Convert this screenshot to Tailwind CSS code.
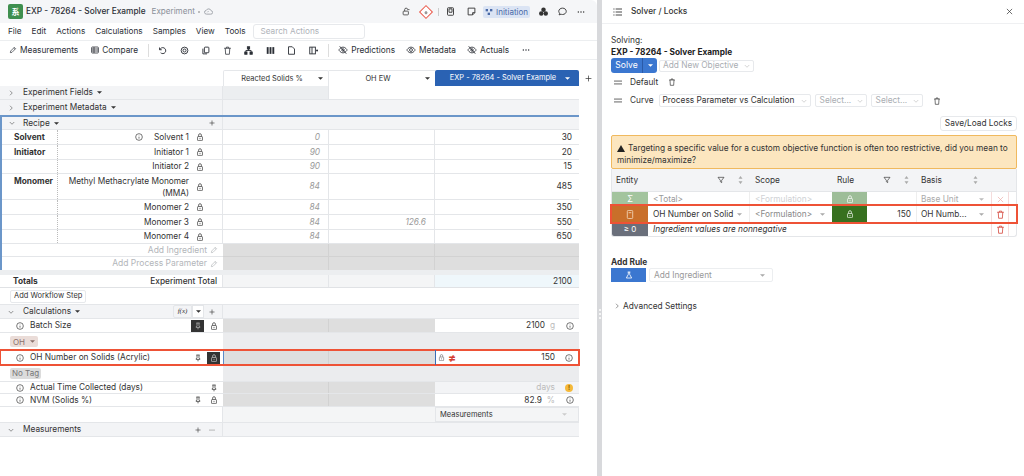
<!doctype html>
<html><head><meta charset="utf-8"><script src="https://cdn.jsdelivr.net/npm/@tailwindcss/browser@4"></script></head>
<body class="m-0 bg-white overflow-hidden">
<svg class="hidden">
<symbol id="lock" viewBox="3 0 18 23" fill="none" stroke="currentColor" stroke-width="2"><rect x="5" y="10" width="14" height="12" rx="2"/><path d="M8 10V6a4 4 0 0 1 8 0v4"/><path d="M12 14v4"/></symbol>
<symbol id="unlock" viewBox="0 0 24 24" fill="none" stroke="currentColor" stroke-width="2"><rect x="3" y="11" width="14" height="10" rx="2"/><path d="M7 11V7a4 4 0 0 1 8 0h5"/></symbol>
<symbol id="pin" viewBox="0 0 24 24" fill="none" stroke="currentColor" stroke-width="2.2"><path d="M7 3h10M9 3v8l-3 4v1h12v-1l-3-4V3M12 16v6"/></symbol>
<symbol id="info" viewBox="0 0 24 24" fill="none" stroke="currentColor" stroke-width="2"><circle cx="12" cy="12" r="10"/><path d="M12 11v6M12 7v1"/></symbol>
<symbol id="pencil" viewBox="0 0 24 24" fill="none" stroke="currentColor" stroke-width="2"><path d="M4 20l1-5L16 4l4 4L9 19l-5 1zM14 6l4 4"/></symbol>
<symbol id="right" viewBox="0 0 24 24" fill="none" stroke="currentColor" stroke-width="2"><path d="M8 3l9 9-9 9"/></symbol>
<symbol id="down" viewBox="0 0 24 24" fill="none" stroke="currentColor" stroke-width="2"><path d="M3 8l9 9 9-9"/></symbol>
<symbol id="caret" viewBox="0 0 10 6"><path d="M0 0.5h10L5 5.5z" fill="currentColor"/></symbol>
<symbol id="plus" viewBox="0 0 24 24" fill="none" stroke="currentColor" stroke-width="2.4"><path d="M12 2v20M2 12h20"/></symbol>
<symbol id="eyeoff" viewBox="0 0 24 24" fill="none" stroke="currentColor" stroke-width="2"><path d="M2 12s4-7 10-7 10 7 10 7-4 7-10 7-10-7-10-7z"/><circle cx="12" cy="12" r="3"/><path d="M4 3l16 18"/></symbol>
<symbol id="eye" viewBox="0 0 24 24" fill="none" stroke="currentColor" stroke-width="2"><path d="M2 12s4-7 10-7 10 7 10 7-4 7-10 7-10-7-10-7z"/><circle cx="12" cy="12" r="3.5"/></symbol>
<symbol id="trash" viewBox="0 0 24 24" fill="none" stroke="currentColor" stroke-width="2"><path d="M3 6h18M9 6V3h6v3M6 6l1 16h10l1-16"/></symbol>
<symbol id="filter" viewBox="0 0 24 24" fill="none" stroke="currentColor" stroke-width="2"><path d="M3 4h18l-7 9v7l-4-3v-4z"/></symbol>
<symbol id="sort" viewBox="0 0 8 14"><path d="M4 0l3.5 5h-7zM4 14l3.500-5h-7z" fill="currentColor"/></symbol>
<symbol id="dots" viewBox="0 0 24 24"><circle cx="4" cy="12" r="2.2" fill="currentColor"/><circle cx="12" cy="12" r="2.2" fill="currentColor"/><circle cx="20" cy="12" r="2.2" fill="currentColor"/></symbol>
<symbol id="flask" viewBox="0 0 24 24" fill="none" stroke="currentColor" stroke-width="2.4"><path d="M8 3h8M10 3v7l-6 11h16l-6-11V3"/></symbol>
<symbol id="grip" viewBox="0 0 14 8"><path d="M0 1.5h14M0 6.5h14" stroke="currentColor" stroke-width="1.6" fill="none"/></symbol>
</svg>
<div class="flex h-[476px] w-[1024px] bg-white font-['Inter','Noto_Sans',sans-serif] text-[8.3px] leading-none text-[#333]">

<!-- left -->
<div class="w-[597px] shrink-0 h-full rounded-tr-[6px] overflow-hidden flex flex-col bg-white">
 <div class="h-[23px] bg-[#f5f6f8] flex items-center pl-[8px] pr-[6px] shrink-0">
  <div class="w-[15px] h-[15px] rounded-[2px] bg-[#3f8f4f] text-white flex items-center justify-center text-[8px] font-bold font-['Noto_Sans_CJK_SC',sans-serif]">系</div>
  <span class="ml-[3px] text-[8.3px] font-medium text-[#2b2f36]">EXP - 78264 - Solver Example</span>
  <span class="ml-[6px] text-[8.1px] text-[#8b9098]">Experiment</span>
  <span class="ml-[3px] w-[2px] h-[2px] rounded-full bg-[#aaa]"></span>
  <svg class="ml-[4px] w-[9px] h-[9px] text-[#8b9098]" viewBox="0 0 24 24" fill="none" stroke="currentColor" stroke-width="2"><path d="M7 19a5 5 0 0 1-1-10 7 7 0 0 1 13 1 4.500 4.500 0 0 1-1 9z"/><path d="M9 14l3-3"/></svg>
  <div class="ml-auto flex items-center">
   <svg class="w-[9px] h-[9px] text-[#333] mr-[10px]"><use href="#unlock"/></svg>
   <span class="w-[10px] h-[10px] rotate-45 border border-[#e8584a] bg-white mr-[7px] flex items-center justify-center"><span class="w-[3px] h-[3px] bg-[#999] rounded-full"></span></span>
   <span class="w-px h-[8px] bg-[#ccc] mr-[7px]"></span>
   <svg class="w-[9px] h-[9px] text-[#333] mr-[12px]" viewBox="0 0 24 24" fill="none" stroke="currentColor" stroke-width="2.4"><rect x="4" y="2" width="16" height="20" rx="2"/><path d="M8 14h8V5H8z"/></svg>
   <svg class="w-[9px] h-[9px] text-[#333] mr-[7px]" viewBox="0 0 24 24" fill="none" stroke="currentColor" stroke-width="2.4"><path d="M3 3h18v12l-6 6H3z"/><path d="M21 15h-6v6"/></svg>
   <div class="w-[47px] h-[12px] rounded-[2px] bg-[#dbe4f4] text-[#4a6aa8] flex items-center justify-center text-[8px] mr-[9px]"><svg class="w-[8px] h-[8px] mr-[3px]" viewBox="0 0 24 24" fill="currentColor"><rect x="2" y="3" width="7" height="7"/><rect x="15" y="3" width="7" height="7"/><rect x="8" y="14" width="7" height="7"/></svg>Initiation</div>
   <svg class="w-[9px] h-[9px] text-[#333] mr-[10px]" viewBox="0 0 24 24" fill="currentColor"><circle cx="12" cy="7" r="6"/><circle cx="6" cy="17" r="6"/><circle cx="18" cy="17" r="6"/></svg>
   <svg class="w-[9px] h-[9px] text-[#333] mr-[10px]" viewBox="0 0 24 24" fill="none" stroke="currentColor" stroke-width="2.4"><path d="M12 3c6 0 10 4 10 8.500s-4 8.500-10 8.500c-1.500 0-3-.3-4-.8L3 21l1.500-4.500C3 15 2 13.500 2 11.500 2 7 6 3 12 3z"/></svg>
   <svg class="w-[8px] h-[8px] text-[#333] mr-[6px]"><use href="#dots"/></svg>
  </div>
 </div>
 <div class="h-[18px] flex items-center pl-[8px] border-b border-[#eceef0] shrink-0 text-[8.2px] text-[#2b2f36]">
  <span>File</span><span class="ml-[10px]">Edit</span><span class="ml-[10px]">Actions</span><span class="ml-[10px]">Calculations</span><span class="ml-[10px]">Samples</span><span class="ml-[10px]">View</span><span class="ml-[10px]">Tools</span>
  <div class="ml-[7px] w-[112px] h-[15px] rounded-[3px] border border-[#e7e9ec] flex items-center px-[7px] text-[#aeb2b8]">Search Actions</div>
 </div>
 <div class="h-[19px] flex items-center pl-[9px] border-b border-[#eceef0] shrink-0 text-[8.3px] text-[#2b2f36]">
  <svg class="w-[8px] h-[8px]"><use href="#pencil"/></svg><span class="ml-[3px]">Measurements</span>
  <svg class="ml-[13px] w-[8px] h-[8px]" viewBox="0 0 24 24" fill="none" stroke="currentColor" stroke-width="2.400"><rect x="2" y="3" width="20" height="18" rx="2"/><path d="M2 9h20M2 15h20M9 3v18"/></svg><span class="ml-[3px]">Compare</span>
  <span class="ml-[10px] w-px h-[13px] bg-[#ddd]"></span>
  <svg class="ml-[9px] w-[9px] h-[9px]" viewBox="0 0 24 24" fill="none" stroke="currentColor" stroke-width="2.400"><path d="M4 4v6h6M5 10a8 8 0 1 1 2 8"/></svg>
  <svg class="ml-[13px] w-[9px] h-[9px]" viewBox="0 0 24 24" fill="none" stroke="currentColor" stroke-width="2.400"><circle cx="12" cy="12" r="9"/><circle cx="12" cy="12" r="4"/></svg>
  <svg class="ml-[12px] w-[9px] h-[9px]" viewBox="0 0 24 24" fill="none" stroke="currentColor" stroke-width="2.400"><rect x="9" y="3" width="12" height="15" rx="2"/><path d="M5 7v14h11"/></svg>
  <svg class="ml-[13px] w-[9px] h-[9px]"><use href="#trash"/></svg>
  <svg class="ml-[12px] w-[9px] h-[9px]" viewBox="0 0 24 24" fill="none" stroke="currentColor" stroke-width="2.400"><rect x="9" y="2" width="6" height="6" fill="currentColor"/><rect x="2" y="16" width="6" height="6" fill="currentColor"/><rect x="16" y="16" width="6" height="6" fill="currentColor"/><path d="M5 16v-4h14v4M12 8v4"/></svg>
  <svg class="ml-[13px] w-[9px] h-[9px]" viewBox="0 0 24 24" fill="currentColor"><rect x="2" y="3" width="5" height="18"/><rect x="9.500" y="3" width="5" height="18"/><rect x="17" y="3" width="5" height="18"/></svg>
  <svg class="ml-[12px] w-[9px] h-[9px]" viewBox="0 0 24 24" fill="none" stroke="currentColor" stroke-width="2.400"><path d="M4 2h10l6 6v14H4z"/></svg>
  <svg class="ml-[13px] w-[9px] h-[9px]" viewBox="0 0 24 24" fill="none" stroke="currentColor" stroke-width="2.400"><rect x="2" y="3" width="15" height="18"/><path d="M8 3v18M19 12h5M21.500 9v6"/></svg>
  <span class="ml-[10px] w-px h-[13px] bg-[#ddd]"></span>
  <svg class="ml-[9px] w-[10px] h-[10px]"><use href="#eyeoff"/></svg><span class="ml-[3px]">Predictions</span>
  <svg class="ml-[11px] w-[10px] h-[10px]"><use href="#eye"/></svg><span class="ml-[3px]">Metadata</span>
  <svg class="ml-[11px] w-[10px] h-[10px]"><use href="#eyeoff"/></svg><span class="ml-[3px]">Actuals</span>
  <svg class="ml-[13px] w-[8px] h-[8px]"><use href="#dots"/></svg>
 </div>
 <div class="h-[10px] shrink-0"></div>
 <!-- column heads -->
 <div class="grid grid-cols-[223px_106px_106px_144px_18px] h-[16px] shrink-0 text-[7.45px]">
  <div></div>
  <div class="border border-b-0 border-[#e5e7ea] rounded-t-[2px] flex items-center justify-center relative pr-[8px]">Reacted Solids %<svg class="absolute right-[5px] w-[5px] h-[3px]"><use href="#caret"/></svg></div>
  <div class="border-t border-[#e5e7ea] flex items-center justify-center relative pr-[8px]">OH EW<svg class="absolute right-[5px] w-[5px] h-[3px]"><use href="#caret"/></svg></div>
  <div class="bg-[#2a62b3] text-white rounded-t-[2px] flex items-center justify-center relative pr-[8px]">EXP - 78264 - Solver Example<svg class="absolute right-[9px] w-[5px] h-[3px]"><use href="#caret"/></svg></div>
  <div class="flex items-center justify-center"><svg class="w-[7px] h-[7px]"><use href="#plus"/></svg></div>
 </div>
 <!-- table -->
 <div class="w-[579px] text-[#333] text-[8.3px] shrink-0">
  <div class="grid grid-cols-[223px_106px_250px] h-[13px]">
   <div class="flex items-center pl-[8px] border-r border-[#e4e6e9] bg-[#f3f4f6]"><svg class="w-[6px] h-[6px]"><use href="#right"/></svg><span class="ml-[9px]">Experiment Fields</span><svg class="ml-[4px] w-[5px] h-[3px]"><use href="#caret"/></svg></div><div class="border-r border-[#e4e6e9] bg-[#eceef0]"></div><div></div>
  </div>
  <div class="grid grid-cols-[223px_356px] h-[16px] bg-[#f3f4f6] border-t border-[#e4e6e9]">
   <div class="flex items-center pl-[8px] border-r border-[#e4e6e9]"><svg class="w-[6px] h-[6px]"><use href="#right"/></svg><span class="ml-[9px]">Experiment Metadata</span><svg class="ml-[4px] w-[5px] h-[3px]"><use href="#caret"/></svg></div><div></div>
  </div>
  <div class="border-t-2 border-l-2 border-[#6b96c9]">
   <div class="grid grid-cols-[221px_106px_106px_144px] h-[13px] bg-[#f3f4f6] border-b border-[#e4e6e9]">
    <div class="flex items-center pl-[7px] border-r border-[#e4e6e9] relative"><svg class="w-[6px] h-[6px]"><use href="#down"/></svg><span class="ml-[8px]">Recipe</span><svg class="ml-[4px] w-[5px] h-[3px]"><use href="#caret"/></svg><svg class="absolute right-[7px] w-[6px] h-[6px]"><use href="#plus"/></svg></div><div></div><div></div><div></div>
   </div>
   <!-- ingredient rows -->
   <div class="grid grid-cols-[56px_165px_106px_106px_144px] h-[15px] border-b border-[#e4e6e9] items-stretch">
    <div class="flex items-center pl-[12px] font-bold border-r border-dotted border-[#bbb]">Solvent</div>
    <div class="flex items-center justify-end pr-[33px] relative border-r border-[#e4e6e9]"><svg class="w-[8px] h-[8px] mr-[11px]"><use href="#info"/></svg>Solvent 1<svg class="absolute right-[18px] w-[8px] h-[8px]"><use href="#lock"/></svg></div>
    <div class="flex items-center justify-end pr-[8px] border-r border-[#e4e6e9] italic text-[#999]">0</div><div class="border-r border-[#e4e6e9]"></div>
    <div class="flex items-center justify-end pr-[7px]">30</div>
   </div>
   <div class="grid grid-cols-[56px_165px_106px_106px_144px] h-[15px] border-b border-[#e4e6e9] items-stretch">
    <div class="flex items-center pl-[12px] font-bold border-r border-dotted border-[#bbb]">Initiator</div>
    <div class="flex items-center justify-end pr-[33px] relative border-r border-[#e4e6e9]">Initiator 1<svg class="absolute right-[18px] w-[8px] h-[8px]"><use href="#lock"/></svg></div>
    <div class="flex items-center justify-end pr-[8px] border-r border-[#e4e6e9] italic text-[#999]">90</div><div class="border-r border-[#e4e6e9]"></div>
    <div class="flex items-center justify-end pr-[7px]">20</div>
   </div>
   <div class="grid grid-cols-[56px_165px_106px_106px_144px] h-[14px] border-b border-[#e4e6e9] items-stretch">
    <div class="border-r border-dotted border-[#bbb]"></div>
    <div class="flex items-center justify-end pr-[33px] relative border-r border-[#e4e6e9]">Initiator 2<svg class="absolute right-[18px] w-[8px] h-[8px]"><use href="#lock"/></svg></div>
    <div class="flex items-center justify-end pr-[8px] border-r border-[#e4e6e9] italic text-[#999]">90</div><div class="border-r border-[#e4e6e9]"></div>
    <div class="flex items-center justify-end pr-[7px]">15</div>
   </div>
   <div class="grid grid-cols-[56px_165px_106px_106px_144px] h-[26px] border-b border-[#e4e6e9] items-stretch">
    <div class="pt-[3px] pl-[12px] font-bold border-r border-dotted border-[#bbb]">Monomer</div>
    <div class="flex items-center justify-end pr-[33px] relative border-r border-[#e4e6e9] text-right leading-[12px] whitespace-nowrap"><span>Methyl Methacrylate Monomer<br>(MMA)</span><svg class="absolute right-[18px] w-[8px] h-[8px]"><use href="#lock"/></svg></div>
    <div class="flex items-center justify-end pr-[8px] border-r border-[#e4e6e9] italic text-[#999]">84</div><div class="border-r border-[#e4e6e9]"></div>
    <div class="flex items-center justify-end pr-[7px]">485</div>
   </div>
   <div class="grid grid-cols-[56px_165px_106px_106px_144px] h-[15px] border-b border-[#e4e6e9] items-stretch">
    <div class="border-r border-dotted border-[#bbb]"></div>
    <div class="flex items-center justify-end pr-[33px] relative border-r border-[#e4e6e9]">Monomer 2<svg class="absolute right-[18px] w-[8px] h-[8px]"><use href="#lock"/></svg></div>
    <div class="flex items-center justify-end pr-[8px] border-r border-[#e4e6e9] italic text-[#999]">84</div><div class="border-r border-[#e4e6e9]"></div>
    <div class="flex items-center justify-end pr-[7px]">350</div>
   </div>
   <div class="grid grid-cols-[56px_165px_106px_106px_144px] h-[15px] border-b border-[#e4e6e9] items-stretch">
    <div class="border-r border-dotted border-[#bbb]"></div>
    <div class="flex items-center justify-end pr-[33px] relative border-r border-[#e4e6e9]">Monomer 3<svg class="absolute right-[18px] w-[8px] h-[8px]"><use href="#lock"/></svg></div>
    <div class="flex items-center justify-end pr-[8px] border-r border-[#e4e6e9] italic text-[#999]">84</div><div class="flex items-center justify-end pr-[8px] border-r border-[#e4e6e9] italic text-[#999]">126.6</div>
    <div class="flex items-center justify-end pr-[7px]">550</div>
   </div>
   <div class="grid grid-cols-[56px_165px_106px_106px_144px] h-[14px] border-b border-[#e4e6e9] items-stretch">
    <div class="border-r border-dotted border-[#bbb]"></div>
    <div class="flex items-center justify-end pr-[33px] relative border-r border-[#e4e6e9]">Monomer 4<svg class="absolute right-[18px] w-[8px] h-[8px]"><use href="#lock"/></svg></div>
    <div class="flex items-center justify-end pr-[8px] border-r border-[#e4e6e9] italic text-[#999]">84</div><div class="border-r border-[#e4e6e9]"></div>
    <div class="flex items-center justify-end pr-[7px]">650</div>
   </div>
   <div class="grid grid-cols-[221px_106px_106px_144px] h-[13px] items-stretch">
    <div class="flex items-center justify-end pr-[5px] text-[8.5px] text-[#b3b6ba] border-b border-[#e4e6e9]">Add Ingredient<svg class="ml-[3px] w-[8px] h-[8px]"><use href="#pencil"/></svg></div>
    <div class="bg-[#dedede] border-r border-b border-[#d2d2d2]"></div><div class="bg-[#dedede] border-r border-b border-[#d2d2d2]"></div><div class="bg-[#dedede] border-b border-[#d2d2d2]"></div>
   </div>
   <div class="grid grid-cols-[221px_106px_106px_144px] h-[13px] items-stretch">
    <div class="flex items-center justify-end pr-[5px] text-[8.5px] text-[#b3b6ba]">Add Process Parameter<svg class="ml-[3px] w-[8px] h-[8px]"><use href="#pencil"/></svg></div>
    <div class="bg-[#dedede] border-r border-[#d2d2d2]"></div><div class="bg-[#dedede] border-r border-[#d2d2d2]"></div><div class="bg-[#dedede]"></div>
   </div>
  </div>
  <div class="h-[5px] bg-[#eceef0]"></div>
  <div class="grid grid-cols-[223px_106px_106px_144px] h-[13px] border-b border-[#e0e2e5] items-stretch">
   <div class="flex items-center justify-between pl-[13px] pr-[5px] border-r border-[#e4e6e9]"><span class="font-bold">Totals</span><span class="font-medium">Experiment Total</span></div>
   <div class="bg-[#f4f5f6] border-r border-[#e4e6e9]"></div><div class="bg-[#f4f5f6] border-r border-[#e4e6e9]"></div>
   <div class="bg-[#eff7fb] flex items-center justify-end pr-[7px]">2100</div>
  </div>
  <div class="h-[16px] flex items-center pl-[10px]"><span class="h-[13px] px-[3px] rounded-[2px] border border-[#e7e9ec] flex items-center text-[7.5px]">Add Workflow Step</span></div>
  <div class="grid grid-cols-[223px_356px] h-[15px] bg-[#f3f4f6] border-y border-[#e4e6e9]">
   <div class="flex items-center pl-[8px] border-r border-[#e4e6e9] relative"><svg class="w-[6px] h-[6px]"><use href="#down"/></svg><span class="ml-[9px]">Calculations</span><svg class="ml-[4px] w-[5px] h-[3px]"><use href="#caret"/></svg>
    <span class="absolute left-[173px] w-[19px] h-[13px] border border-[#e4e6e9] rounded-l-[2px] flex items-center justify-center font-['Liberation_Serif',serif] text-[7px] italic">f(x)</span>
    <span class="absolute left-[192px] w-[12px] h-[13px] bg-white border border-[#e4e6e9] flex items-center justify-center"><svg class="w-[5px] h-[3px]"><use href="#caret"/></svg></span>
    <svg class="absolute right-[7px] w-[6px] h-[6px]"><use href="#plus"/></svg></div><div></div>
  </div>
  <div class="grid grid-cols-[223px_106px_106px_144px] h-[14px] border-b border-[#e4e6e9] items-stretch">
   <div class="flex items-center pl-[16px] relative"><svg class="w-[8px] h-[8px] mr-[6px]"><use href="#info"/></svg>Batch Size<span class="absolute right-[19px] w-[13px] h-[12px] bg-[#333] flex items-center justify-center text-[#bbb]"><svg class="w-[8px] h-[8px]"><use href="#pin"/></svg></span><svg class="absolute right-[5px] w-[8px] h-[8px]"><use href="#lock"/></svg></div>
   <div class="bg-[#dedede] border-r border-[#d2d2d2]"></div><div class="bg-[#dedede]"></div>
   <div class="flex items-center justify-end relative pr-[34px]">2100<span class="absolute right-[24px] text-[#bbb]">g</span><svg class="absolute right-[5px] w-[8px] h-[8px]"><use href="#info"/></svg></div>
  </div>
  <div class="grid grid-cols-[223px_356px] h-[17px]"><div class="flex items-center pl-[10px]"><span class="h-[11px] w-[28px] rounded-[2px] bg-[#eadcd8] text-[#8a6f6a] flex items-center pl-[3px] text-[8px]">OH<svg class="ml-[5px] w-[5px] h-[3px]"><use href="#caret"/></svg></span></div><div class="bg-[#ebecee]"></div></div>
  <div class="relative grid grid-cols-[223px_106px_106px_144px] h-[15px] items-stretch outline-2 -outline-offset-1 outline-[#ee5236]">
   <div class="flex items-center pl-[16px] relative pr-[4px]"><svg class="w-[8px] h-[8px] mr-[6px]"><use href="#info"/></svg>OH Number on Solids (Acrylic)<svg class="absolute right-[21px] w-[8px] h-[8px]"><use href="#pin"/></svg><span class="absolute right-[3px] w-[13px] h-[12px] bg-[#333] flex items-center justify-center text-[#ccc]"><svg class="w-[8px] h-[8px]"><use href="#lock"/></svg></span></div>
   <div class="bg-[#dedede] border-r border-[#d2d2d2] border-l border-l-[#5b8bc9]"></div><div class="bg-[#dedede]"></div>
   <div class="flex items-center relative border-l border-[#3a6cb5] pl-[2px]"><svg class="w-[7px] h-[7px] text-[#666]"><use href="#lock"/></svg><span class="ml-[3px] text-[12px] font-bold leading-none text-[#d23b30]">≠</span><span class="absolute right-[24px]">150</span><svg class="absolute right-[6px] w-[8px] h-[8px]"><use href="#info"/></svg></div>
  </div>
  <div class="grid grid-cols-[223px_356px] h-[16px]"><div class="flex items-center pl-[10px]"><span class="h-[11px] px-[2px] rounded-[2px] bg-[#dcdcdc] text-[#777] flex items-center text-[8px]">No Tag</span></div><div class="bg-[#ebecee]"></div></div>
  <div class="grid grid-cols-[223px_106px_106px_144px] h-[13px] border-y border-[#e4e6e9] items-stretch">
   <div class="flex items-center pl-[16px] relative"><svg class="w-[8px] h-[8px] mr-[6px]"><use href="#info"/></svg>Actual Time Collected (days)<svg class="absolute right-[5px] w-[8px] h-[8px]"><use href="#pin"/></svg></div>
   <div class="bg-[#dedede] border-r border-[#d2d2d2]"></div><div class="bg-[#dedede]"></div>
   <div class="bg-[#f3f4f6] flex items-center justify-end relative pr-[24px] text-[#bbb]">days<span class="absolute right-[6px] w-[8px] h-[8px] rounded-full bg-[#f5b93a] text-[#8a5a00] flex items-center justify-center text-[6px] font-bold">!</span></div>
  </div>
  <div class="grid grid-cols-[223px_106px_106px_144px] h-[13px] border-b border-[#e4e6e9] items-stretch">
   <div class="flex items-center pl-[16px] relative"><svg class="w-[8px] h-[8px] mr-[6px]"><use href="#info"/></svg>NVM (Solids %)<svg class="absolute right-[21px] w-[8px] h-[8px]"><use href="#pin"/></svg><svg class="absolute right-[5px] w-[8px] h-[8px]"><use href="#lock"/></svg></div>
   <div class="bg-[#dedede] border-r border-[#d2d2d2]"></div><div class="bg-[#dedede]"></div>
   <div class="flex items-center justify-end relative pr-[37px]">82.9<span class="absolute right-[24px] text-[#bbb]">%</span><svg class="absolute right-[5px] w-[8px] h-[8px]"><use href="#info"/></svg></div>
  </div>
  <div class="grid grid-cols-[223px_106px_106px_144px] h-[15px] items-stretch">
   <div class="border-r border-[#e4e6e9]"></div><div class="bg-[#f4f5f6]"></div><div class="bg-[#f4f5f6]"></div>
   <div class="bg-[#f4f5f6] border border-[#e4e6e9] flex items-center pl-[4px] text-[7.5px] relative">Measurements<svg class="absolute right-[11px] w-[5px] h-[3px] text-[#ccc]"><use href="#caret"/></svg></div>
  </div>
  <div class="grid grid-cols-[223px_356px] h-[15px] bg-[#f3f4f6] border-y border-[#e4e6e9]">
   <div class="flex items-center pl-[8px] border-r border-[#e4e6e9] relative"><svg class="w-[6px] h-[6px]"><use href="#down"/></svg><span class="ml-[9px]">Measurements</span><svg class="absolute right-[21px] w-[6px] h-[6px]"><use href="#plus"/></svg><svg class="absolute right-[7px] w-[6px] h-[6px] text-[#666]"><use href="#dots"/></svg></div><div></div>
  </div>
 </div>
</div>

<!-- gutter -->
<div class="w-[5px] shrink-0 h-full bg-[#d8d9dc] flex flex-col items-center pt-[309px] gap-[2px]">
 <span class="w-[2px] h-[2px] bg-[#f5f5f5]"></span><span class="w-[2px] h-[2px] bg-[#f5f5f5]"></span><span class="w-[2px] h-[2px] bg-[#f5f5f5]"></span>
</div>

<!-- right -->
<div class="flex-1 h-full rounded-tl-[3px] bg-white flex flex-col">
 <div class="h-[24px] border-b border-[#eff0f2] flex items-center pl-[11px] pr-[11px] shrink-0">
  <svg class="w-[9px] h-[8px] text-[#333]" viewBox="0 0 24 20" fill="none" stroke="currentColor" stroke-width="2.400"><path d="M7 2h17M7 10h17M7 18h17M1 2h3M1 10h3M1 18h3"/></svg>
  <span class="ml-[9px] font-medium">Solver / Locks</span>
  <svg class="ml-auto w-[7px] h-[7px]" viewBox="0 0 24 24" fill="none" stroke="currentColor" stroke-width="2.400"><path d="M3 3l18 18M21 3L3 21"/></svg>
 </div>
 <div class="pl-[9px] pr-[7px] flex flex-col">
  <div class="mt-[10px] h-[12px] flex items-center">Solving:</div>
  <div class="font-bold h-[12px] flex items-center text-[#222]">EXP - 78264 - Solver Example</div>
  <div class="flex items-center h-[15px]">
   <span class="w-[46px] h-[15px] rounded-[3px] bg-[#3b77d0] text-white text-[8.6px] flex items-center"><span class="w-[32px] text-center border-r border-[#2a5aa8] h-full flex items-center justify-center">Solve</span><svg class="ml-[5px] w-[5px] h-[3px]"><use href="#caret"/></svg></span>
   <span class="ml-[2px] w-[95px] h-[12px] rounded-[2px] border border-[#e7e9ec] flex items-center pl-[3px] text-[#a9adb2] relative">Add New Objective<svg class="absolute right-[3px] w-[6px] h-[6px] text-[#aaa]"><use href="#down"/></svg></span>
  </div>
  <div class="flex items-center h-[18px]">
   <svg class="ml-[3px] w-[8px] h-[5px] text-[#555]"><use href="#grip"/></svg><span class="ml-[8px]">Default</span><svg class="ml-[10px] w-[8px] h-[8px]"><use href="#trash"/></svg>
  </div>
  <div class="flex items-center h-[19px]">
   <svg class="ml-[3px] w-[8px] h-[5px] text-[#555]"><use href="#grip"/></svg><span class="ml-[8px]">Curve</span>
   <span class="ml-[5px] w-[152px] h-[13px] rounded-[2px] border border-[#e7e9ec] flex items-center pl-[3px] relative whitespace-nowrap">Process Parameter vs Calculation<svg class="absolute right-[3px] w-[6px] h-[6px] text-[#aaa]"><use href="#down"/></svg></span>
   <span class="ml-[4px] w-[52px] h-[13px] rounded-[2px] border border-[#e7e9ec] flex items-center pl-[4px] text-[#a9adb2] relative">Select...<svg class="absolute right-[3px] w-[6px] h-[6px] text-[#aaa]"><use href="#down"/></svg></span>
   <span class="ml-[4px] w-[52px] h-[13px] rounded-[2px] border border-[#e7e9ec] flex items-center pl-[4px] text-[#a9adb2] relative">Select...<svg class="absolute right-[3px] w-[6px] h-[6px] text-[#aaa]"><use href="#down"/></svg></span>
   <svg class="ml-[10px] w-[8px] h-[8px]"><use href="#trash"/></svg>
  </div>
  <div class="flex justify-end mt-[6px] pr-[0px]"><span class="w-[77px] h-[15px] rounded-[3px] border border-[#e7e9ec] flex items-center justify-center">Save/Load Locks</span></div>
  <div class="mt-[4px] h-[34px] w-[406px] rounded-[2px] border border-[#f0b95e] bg-[#fce6bf] px-[5px] pt-[6px] leading-[12px] text-[#333]"><svg class="inline-block w-[8px] h-[7px] mr-[3px] align-[-0.5px]" viewBox="0 0 16 14"><path d="M8 0l8 14H0z" fill="#222"/></svg>Targeting a specific value for a custom objective function is often too restrictive, did you mean to minimize/maximize?</div>
  <!-- rule table -->
  <div class="w-[406px] border border-[#e4e6e9] border-t-0 rounded-b-[3px]">
   <div class="grid grid-cols-[36px_102px_82px_35px_50px_74px_27px] h-[23px] bg-[#f3f4f6] border-b border-[#e4e6e9] items-stretch">
    <div class="col-span-2 flex items-center pl-[4px] relative">Entity<svg class="absolute left-[105px] w-[8px] h-[8px]"><use href="#filter"/></svg><svg class="absolute left-[126px] w-[5px] h-[8px] text-[#aaa]"><use href="#sort"/></svg></div>
    <div class="flex items-center pl-[5px]">Scope</div>
    <div class="flex items-center pl-[5px]">Rule</div>
    <div class="flex items-center relative"><svg class="absolute left-[16px] w-[8px] h-[8px]"><use href="#filter"/></svg><svg class="absolute left-[37px] w-[5px] h-[8px] text-[#aaa]"><use href="#sort"/></svg></div>
    <div class="flex items-center pl-[4px] relative">Basis<svg class="absolute left-[56px] w-[5px] h-[8px] text-[#aaa]"><use href="#sort"/></svg></div>
    <div></div>
   </div>
   <div class="grid grid-cols-[36px_102px_82px_35px_50px_74px_27px] h-[14px] items-stretch">
    <div class="bg-[#a3c49e] text-white flex items-center justify-center">Σ</div>
    <div class="flex items-center pl-[5px] text-[#999] border-r border-[#eee]">&lt;Total&gt;</div>
    <div class="flex items-center pl-[5px] text-[#d0d2d5]">&lt;Formulation&gt;</div>
    <div class="bg-[#9dbd98] text-white flex items-center justify-center"><svg class="w-[8px] h-[8px]"><use href="#lock"/></svg></div>
    <div class="border-r border-[#eee]"></div>
    <div class="flex items-center pl-[4px] text-[#aaa] relative">Base Unit<svg class="absolute right-[7px] w-[5px] h-[3px] text-[#bbb]"><use href="#caret"/></svg></div>
    <div class="flex items-center justify-center border-x border-[#f5dcdc] mr-[9px] text-[#ecb0ac]"><svg class="w-[7px] h-[7px]" viewBox="0 0 24 24" fill="none" stroke="currentColor" stroke-width="2.400"><path d="M3 3l18 18M21 3L3 21"/></svg></div>
   </div>
   <div class="relative grid grid-cols-[36px_102px_82px_35px_50px_74px_27px] h-[16px] items-stretch outline-2 outline-[#ee5236]">
    <div class="bg-[#c96f2a] text-[#f1d1b3] flex items-center justify-center"><svg class="w-[8px] h-[9px]" viewBox="0 0 16 20" fill="none" stroke="currentColor" stroke-width="2"><rect x="2" y="1" width="12" height="18" rx="2"/><path d="M5 6h6"/></svg></div>
    <div class="flex items-center pl-[5px] relative border-r border-[#eee]">OH Number on Solid<svg class="absolute right-[7px] w-[5px] h-[3px] text-[#aaa]"><use href="#caret"/></svg></div>
    <div class="flex items-center pl-[5px] text-[#888] relative">&lt;Formulation&gt;<svg class="absolute right-[7px] w-[5px] h-[3px] text-[#aaa]"><use href="#caret"/></svg></div>
    <div class="bg-[#37701f] text-white flex items-center justify-center"><svg class="w-[8px] h-[8px]"><use href="#lock"/></svg></div>
    <div class="flex items-center justify-end pr-[5px] border-r border-[#eee]">150</div>
    <div class="flex items-center pl-[4px] relative">OH Numb...<svg class="absolute right-[7px] w-[5px] h-[3px] text-[#aaa]"><use href="#caret"/></svg></div>
    <div class="flex items-center justify-center border-x border-[#f5dcdc] mr-[9px] text-[#d23b30]"><svg class="w-[9px] h-[9px]"><use href="#trash"/></svg></div>
   </div>
   <div class="grid grid-cols-[36px_343px_27px] h-[14px] items-stretch">
    <div class="bg-[#6a6f7b] text-white flex items-center justify-center rounded-bl-[2px] text-[8px]">≥ 0</div>
    <div class="flex items-center pl-[5px] italic">Ingredient values are nonnegative</div>
    <div class="flex items-center justify-center border-x border-[#f5dcdc] mr-[9px] text-[#d23b30]"><svg class="w-[9px] h-[9px]"><use href="#trash"/></svg></div>
   </div>
  </div>
  <div class="mt-[20px] font-bold h-[11px] flex items-center">Add Rule</div>
  <div class="flex items-center h-[14px]">
   <span class="w-[35px] h-[14px] bg-[#3b77d0] text-white flex items-center justify-center"><svg class="w-[8px] h-[8px]"><use href="#flask"/></svg></span>
   <span class="ml-[3px] w-[124px] h-[14px] rounded-[2px] border border-[#eceef0] flex items-center pl-[4px] text-[#999] relative">Add Ingredient<svg class="absolute right-[7px] w-[5px] h-[3px] text-[#aaa]"><use href="#caret"/></svg></span>
  </div>
  <div class="flex items-center mt-[19px] h-[10px]"><svg class="ml-[3px] w-[6px] h-[6px]"><use href="#right"/></svg><span class="ml-[3px]">Advanced Settings</span></div>
 </div>
</div>
</div>
</body></html>
